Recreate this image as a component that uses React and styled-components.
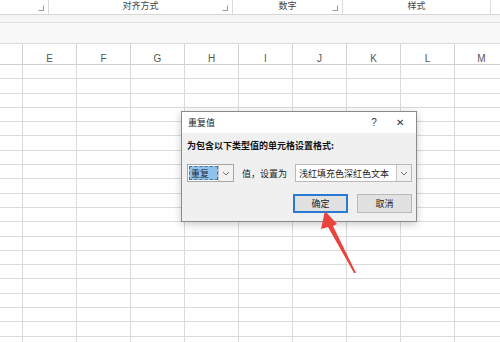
import React from 'react';
import styled, { createGlobalStyle } from 'styled-components';

const COLUMNS = ['E', 'F', 'G', 'H', 'I', 'J', 'K', 'L', 'M'];
const ROW_COUNT = 20;

const GlobalStyle = createGlobalStyle`
  html, body {
    margin: 0;
    padding: 0;
    background: #ffffff;
  }
  body {
    width: 500px;
    height: 342px;
    overflow: hidden;
    font-family: "Noto Sans CJK SC", "Noto Sans", sans-serif;
  }
`;

const Page = styled.div`
  position: relative;
  width: 500px;
  height: 342px;
  overflow: hidden;
  display: flex;
  flex-direction: column;
  background: #fff;
  & > * {
    flex-shrink: 0;
  }
`;

const Ribbon = styled.div`
  height: 14px;
  display: grid;
  grid-template-columns: 49px 184px 110px 148px 1fr;
  border-bottom: 1px solid #d6d6d6;
  background: #fff;
`;

const RibbonGroup = styled.div`
  position: relative;
  border-right: ${p => (p.$last ? 'none' : '1px solid #dcdcdc')};
  font-size: 9px;
  line-height: 12px;
  color: #444;
  text-align: center;
`;

const Launcher = styled.span`
  position: absolute;
  right: 4px;
  top: 5px;
  width: 4px;
  height: 4px;
  border: 1px solid #9a9a9a;
  border-top-color: transparent;
  border-left-color: transparent;
`;

const Gap = styled.div`
  height: 7px;
  background: #f5f5f5;
  border-bottom: 1px solid #e2e2e2;
`;

const FormulaBar = styled.div`
  height: 20px;
  background: #f8f8f8;
  border-bottom: 1px solid #d9d9d9;
`;

const Grid = styled.div`
  display: grid;
  grid-template-columns: 23px repeat(9, 54px) 1fr;
`;

const HeaderCell = styled.div`
  height: 21px;
  box-sizing: border-box;
  border-right: 1px solid #d4d4d4;
  border-bottom: 1px solid #cfcfcf;
  font-family: "Liberation Sans", Arial, sans-serif;
  font-size: 10px;
  color: #555;
  display: flex;
  align-items: flex-end;
  justify-content: center;
  padding-bottom: 0;
`;

const Cell = styled.div`
  height: 14.3px;
  box-sizing: border-box;
  border-right: 1px solid #dadada;
  border-bottom: 1px solid #dadada;
`;

const Dialog = styled.div`
  position: absolute;
  left: 181px;
  top: 111px;
  width: 236px;
  height: 111px;
  box-sizing: border-box;
  border: 1px solid #8a8a8a;
  background: #f0f0f0;
  box-shadow: 0 2px 8px rgba(0, 0, 0, 0.22);
  display: flex;
  flex-direction: column;
`;

const TitleBar = styled.div`
  height: 21px;
  background: #fff;
  display: flex;
  align-items: center;
  padding: 0 0 0 6px;
  font-size: 9px;
  color: #222;
`;

const Title = styled.span`
  flex: 1;
`;

const TitleButton = styled.span`
  width: ${p => p.$w}px;
  text-align: center;
  font-family: "Liberation Sans", Arial, sans-serif;
  font-size: 10px;
  color: #333;
`;

const Body = styled.div`
  flex: 1;
  padding: 7px 4px 0 5px;
  display: flex;
  flex-direction: column;
`;

const Prompt = styled.div`
  font-size: 9px;
  font-weight: bold;
  color: #111;
  line-height: 12px;
`;

const FieldRow = styled.div`
  margin-top: 12px;
  display: flex;
  align-items: center;
  height: 18px;
`;

const Combo = styled.div`
  width: ${p => p.$w}px;
  height: 18px;
  box-sizing: border-box;
  border: 1px solid ${p => (p.$focus ? '#a8a8a8' : '#b9b9b9')};
  background: #fff;
  display: flex;
  align-items: stretch;
`;

const ComboValue = styled.div`
  flex: 1;
  display: flex;
  align-items: center;
  padding-left: ${p => (p.$selected ? '1px' : '3px')};
  font-size: 9px;
  color: #222;
  white-space: nowrap;
  overflow: hidden;
`;

const Selection = styled.span`
  display: flex;
  align-items: center;
  width: 29px;
  height: 14px;
  box-sizing: border-box;
  padding-left: 1px;
  background: #8fc3ee;
  border: 1px dashed #4f6f8f;
  color: #1a2a3a;
`;

const ComboArrow = styled.div`
  width: 14px;
  border-left: 1px solid #c8c8c8;
  background: ${p => (p.$gray ? '#f2f2f2' : '#fff')};
  display: flex;
  align-items: center;
  justify-content: center;
`;

const FieldLabel = styled.span`
  margin: 0 8px 0 8px;
  font-size: 9px;
  color: #222;
  white-space: nowrap;
`;

const ButtonRow = styled.div`
  margin-top: 12px;
  display: flex;
  justify-content: flex-end;
  gap: 9px;
`;

const Button = styled.div`
  width: 55px;
  height: 19px;
  box-sizing: border-box;
  background: #e1e1e1;
  border: ${p => (p.$primary ? '2px solid #2a7ad2' : '1px solid #b8b8b8')};
  display: flex;
  align-items: center;
  justify-content: center;
  font-size: 9px;
  color: #222;
`;

const ArrowLayer = styled.svg`
  position: absolute;
  left: 0;
  top: 0;
  pointer-events: none;
`;

const Chevron = () => (
  <svg width="8" height="5" viewBox="0 0 8 5">
    <path d="M1 1 L4 4 L7 1" fill="none" stroke="#666" strokeWidth="0.9" />
  </svg>
);

export default function App() {
  return (
    <Page>
      <GlobalStyle />
      <Ribbon>
        <RibbonGroup><Launcher /></RibbonGroup>
        <RibbonGroup>对齐方式<Launcher /></RibbonGroup>
        <RibbonGroup>数字<Launcher /></RibbonGroup>
        <RibbonGroup>样式</RibbonGroup>
        <RibbonGroup $last />
      </Ribbon>
      <Gap />
      <FormulaBar />
      <Grid>
        <HeaderCell />
        {COLUMNS.map(c => <HeaderCell key={c}>{c}</HeaderCell>)}
        <HeaderCell />
        {Array.from({ length: ROW_COUNT }).map((_, r) =>
          Array.from({ length: 11 }).map((__, c) => <Cell key={`${r}-${c}`} />)
        )}
      </Grid>

      <Dialog>
        <TitleBar>
          <Title>重复值</Title>
          <TitleButton $w={20}>?</TitleButton>
          <TitleButton $w={32}>✕</TitleButton>
        </TitleBar>
        <Body>
          <Prompt>为包含以下类型值的单元格设置格式:</Prompt>
          <FieldRow>
            <Combo $w={47} $focus>
              <ComboValue $selected><Selection>重复</Selection></ComboValue>
              <ComboArrow $gray><Chevron /></ComboArrow>
            </Combo>
            <FieldLabel>值，设置为</FieldLabel>
            <Combo $w={120}>
              <ComboValue>浅红填充色深红色文本</ComboValue>
              <ComboArrow $gray><Chevron /></ComboArrow>
            </Combo>
          </FieldRow>
          <ButtonRow>
            <Button $primary>确定</Button>
            <Button>取消</Button>
          </ButtonRow>
        </Body>
      </Dialog>

      <ArrowLayer width="500" height="342" viewBox="0 0 500 342">
        <polygon
          points="325,211 337,224 333,226 356,273 354,273 328,227 321,229"
          fill="#e8433d"
        />
      </ArrowLayer>
    </Page>
  );
}
